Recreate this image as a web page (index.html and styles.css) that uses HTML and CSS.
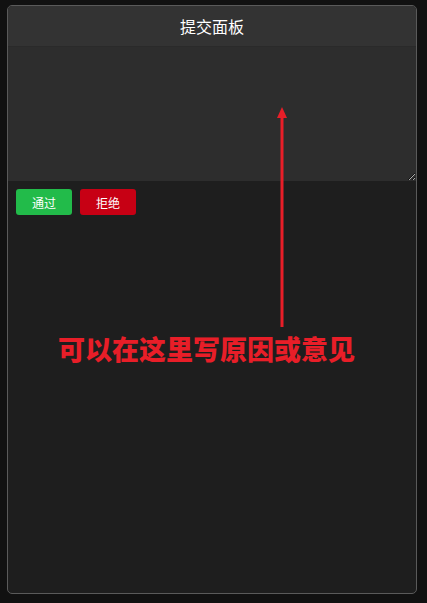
FILE: index.html
```html
<!DOCTYPE html>
<html lang="zh">
<head>
<meta charset="utf-8">
<link rel="stylesheet" href="styles.css">
</head>
<body>
<div class="panel">
  <div class="header">提交面板</div>
  <textarea class="reason"></textarea>
  <div class="actions">
    <button class="btn approve">通过</button>
    <button class="btn reject">拒绝</button>
  </div>
  <div class="arrow">
    <svg width="12" height="220" viewBox="0 0 12 220"><polygon points="6,0 11,11 1,11" fill="#e81e28"/><rect x="4.5" y="8" width="3" height="212" fill="#e81e28"/></svg>
  </div>
  <div class="note">可以在这里写原因或意见</div>
</div>
</body>
</html>
```
FILE: styles.css
```css
html, body {
  margin: 0;
  background: #111111;
}
body {
  padding: 5px 10px 0 7px;
  font-family: "Noto Sans CJK SC", "Noto Sans", sans-serif;
}
.panel {
  position: relative;
  width: 410px;
  height: 589px;
  box-sizing: border-box;
  border: 1px solid #5a5a5a;
  border-radius: 5px;
  background: #1e1e1e;
  display: flex;
  flex-direction: column;
  overflow: hidden;
}
.header {
  height: 40px;
  flex: none;
  background: #333333;
  color: #ffffff;
  font-size: 16px;
  display: flex;
  align-items: center;
  justify-content: center;
  border-bottom: 1px solid #2a2a2a;
}
.reason {
  display: block;
  height: 134px;
  flex: none;
  margin: 0;
  padding: 4px;
  box-sizing: border-box;
  width: 100%;
  border: none;
  background: #2d2d2d;
  color: #ddd;
  outline: none;
  resize: vertical;
}
.actions {
  display: flex;
  gap: 8px;
  padding: 8px 8px 0;
}
.btn {
  width: 56px;
  height: 26px;
  border: none;
  border-radius: 3px;
  color: #ffffff;
  font-family: "Noto Sans CJK SC", sans-serif;
  font-size: 12px;
  padding: 0;
}
.approve { background: #22bb4a; }
.reject { background: #c70014; }
.arrow {
  position: absolute;
  left: 268px;
  top: 101px;
  line-height: 0;
}
.note {
  position: absolute;
  left: 50px;
  top: 323px;
  line-height: 40px;
  color: #e81e28;
  font-size: 27px;
  font-weight: 900;
  white-space: nowrap;
}
```
